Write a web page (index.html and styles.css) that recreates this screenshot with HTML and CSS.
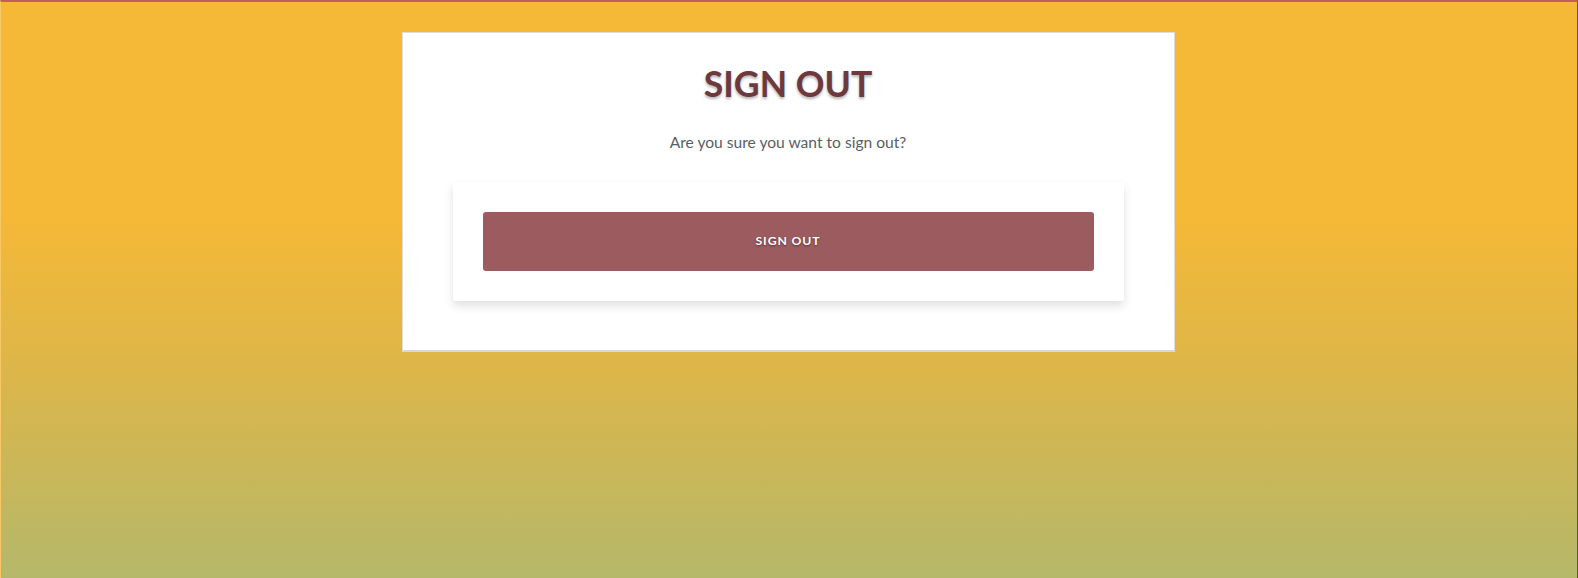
FILE: index.html
```html
<!DOCTYPE html>
<html lang="en">
<head>
<meta charset="utf-8">
<title>Sign out</title>
<link rel="stylesheet" href="styles.css">
</head>
<body>
<div class="page">
  <main class="card">
    <h1 class="title">SIGN OUT</h1>
    <p class="lead">Are you sure you want to sign out?</p>
    <form class="panel">
      <button type="button" class="btn">SIGN OUT</button>
    </form>
  </main>
</div>
</body>
</html>
```

FILE: styles.css
```css
html, body {
  margin: 0;
  padding: 0;
  height: 100%;
}
body {
  font-family: Lato, "Open Sans", sans-serif;
}
.page {
  box-sizing: border-box;
  min-height: 100%;
  border-top: 2px solid #c0605a;
  border-left: 1px solid #f8c766;
  border-right: 1px solid #555555;
  background: linear-gradient(to bottom, #f5b837 0%, #f5b837 38%, #dbb64a 65%, #b5b86a 100%);
  padding-top: 30px;
  display: flex;
  flex-direction: column;
  align-items: center;
}
.card {
  box-sizing: border-box;
  width: 773px;
  margin-right: 2px;
  background: #ffffff;
  border: 1px solid #dcdcdc;
  border-bottom: 2px solid #d8d8d8;
  padding: 29px 50px 49px;
  text-align: center;
}
.title {
  margin: 0;
  font-size: 35.6px;
  font-weight: 700;
  line-height: 43px;
  color: #6e383d;
  text-shadow: 0 2px 3px rgba(0, 0, 0, 0.3);
}
.lead {
  margin: 28px 0 0;
  font-size: 15.6px;
  line-height: 19px;
  color: #595e66;
}
.panel {
  margin: 30px 0 0;
  padding: 30px;
  background: #ffffff;
  box-shadow: 0 0 1px rgba(0, 0, 0, 0.06), 0 5px 10px rgba(0, 0, 0, 0.12);
  border-radius: 2px;
}
.btn {
  display: block;
  width: 100%;
  height: 59px;
  padding: 0 0 3px;
  border: 0;
  border-radius: 3px;
  background: #9c5b5e;
  color: #ffffff;
  font-family: Lato, "Open Sans", sans-serif;
  font-size: 12.2px;
  font-weight: 700;
  letter-spacing: 0.9px;
  text-shadow: 0 1px 2px rgba(0, 0, 0, 0.45);
  cursor: pointer;
}
```
